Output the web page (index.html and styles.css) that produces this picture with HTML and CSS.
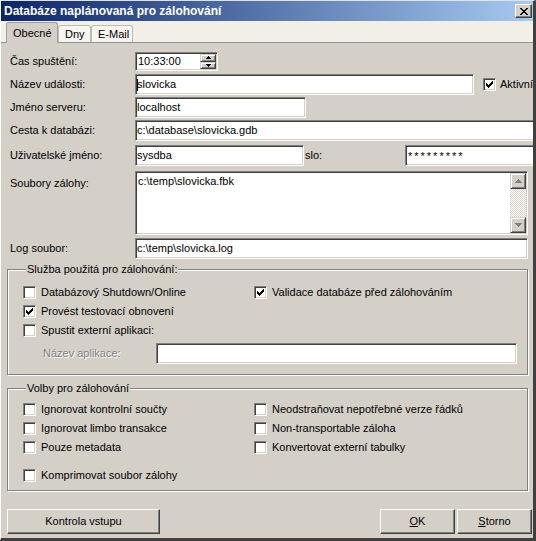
FILE: index.html
```html
<!DOCTYPE html>
<html lang="cs">
<head>
<meta charset="utf-8">
<title>Databáze naplánovaná pro zálohování</title>
<link rel="stylesheet" href="styles.css">
</head>
<body>
<div class="window">
  <div class="titlebar">
    <span class="title">Databáze naplánovaná pro zálohování</span>
    <span class="close"><svg width="8" height="7" viewBox="0 0 8 7" shape-rendering="crispEdges"><path fill="#000" d="M0 0h2v1H0zM6 0h2v1H6zM1 1h2v1H1zM5 1h2v1H5zM2 2h4v1H2zM3 3h2v1H3zM2 4h4v1H2zM1 5h2v1H1zM5 5h2v1H5zM0 6h2v1H0zM6 6h2v1H6z"/></svg></span>
  </div>
  <div class="tabstrip">
    <div class="tab active t1">Obecné</div>
    <div class="tab t2">Dny</div>
    <div class="tab t3">E-Mail</div>
  </div>
  <div class="page">
    <div class="row r-time">
      <span class="lbl">Čas spuštění:</span>
      <div class="field time">
        <span class="ftext">10:33:00</span>
        <div class="spin">
          <span class="sbtn"><svg width="5" height="3" viewBox="0 0 5 3" shape-rendering="crispEdges"><path fill="#000" d="M2 0h1v1H2zM1 1h3v1H1zM0 2h5v1H0z"/></svg></span>
          <span class="sbtn"><svg width="5" height="3" viewBox="0 0 5 3" shape-rendering="crispEdges"><path fill="#000" d="M0 0h5v1H0zM1 1h3v1H1zM2 2h1v1H2z"/></svg></span>
        </div>
      </div>
    </div>
    <div class="row r-name">
      <span class="lbl">Název události:</span>
      <div class="field w-name"><i class="caret"></i>slovicka</div>
      <span class="chk chk-akt"><svg width="7" height="7" viewBox="0 0 7 7" shape-rendering="crispEdges"><path fill="#000" d="M6 0h1v1H6zM5 1h2v1H5zM0 2h1v1H0zM4 2h3v1H4zM0 3h2v1H0zM3 3h3v1H3zM0 4h5v1H0zM1 5h3v1H1zM2 6h1v1H2z"/></svg></span>
      <span class="chklbl">Aktivní</span>
    </div>
    <div class="row r-srv">
      <span class="lbl">Jméno serveru:</span>
      <div class="field w-srv">localhost</div>
    </div>
    <div class="row r-path">
      <span class="lbl">Cesta k databázi:</span>
      <div class="field w-path">c:\database\slovicka.gdb</div>
    </div>
    <div class="row r-user">
      <span class="lbl">Uživatelské jméno:</span>
      <div class="field w-user">sysdba</div>
      <span class="pwlbl">slo:</span>
      <div class="field w-pw">*********</div>
    </div>
    <div class="row r-memo">
      <span class="lbl lbl-top">Soubory zálohy:</span>
      <div class="field memo">
        <div class="memotext">c:\temp\slovicka.fbk</div>
        <div class="vscroll">
          <span class="scbtn"><svg width="7" height="4" viewBox="0 0 7 4" shape-rendering="crispEdges"><path fill="#808080" d="M3 0h1v1H3zM2 1h3v1H2zM1 2h5v1H1zM0 3h7v1H0z"/></svg></span>
          <span class="sctrack"></span>
          <span class="scbtn"><svg width="7" height="4" viewBox="0 0 7 4" shape-rendering="crispEdges"><path fill="#808080" d="M0 0h7v1H0zM1 1h5v1H1zM2 2h3v1H2zM3 3h1v1H3z"/></svg></span>
        </div>
      </div>
    </div>
    <div class="row r-log">
      <span class="lbl">Log soubor:</span>
      <div class="field w-log">c:\temp\slovicka.log</div>
    </div>

    <fieldset class="group g1">
      <legend>Služba použitá pro zálohování:</legend>
      <div class="cgrid">
        <div class="crow"><span class="chk"></span><span class="chklbl">Databázový Shutdown/Online</span></div>
        <div class="crow"><span class="chk"><svg width="7" height="7" viewBox="0 0 7 7" shape-rendering="crispEdges"><path fill="#000" d="M6 0h1v1H6zM5 1h2v1H5zM0 2h1v1H0zM4 2h3v1H4zM0 3h2v1H0zM3 3h3v1H3zM0 4h5v1H0zM1 5h3v1H1zM2 6h1v1H2z"/></svg></span><span class="chklbl">Validace databáze před zálohováním</span></div>
        <div class="crow"><span class="chk"><svg width="7" height="7" viewBox="0 0 7 7" shape-rendering="crispEdges"><path fill="#000" d="M6 0h1v1H6zM5 1h2v1H5zM0 2h1v1H0zM4 2h3v1H4zM0 3h2v1H0zM3 3h3v1H3zM0 4h5v1H0zM1 5h3v1H1zM2 6h1v1H2z"/></svg></span><span class="chklbl">Provést testovací obnovení</span></div>
        <div class="crow"></div>
        <div class="crow"><span class="chk"></span><span class="chklbl">Spustit externí aplikaci:</span></div>
      </div>
      <div class="approw">
        <span class="dislbl">Název aplikace:</span>
        <div class="field w-app"></div>
      </div>
    </fieldset>

    <fieldset class="group g2">
      <legend>Volby pro zálohování</legend>
      <div class="cgrid">
        <div class="crow"><span class="chk"></span><span class="chklbl">Ignorovat kontrolní součty</span></div>
        <div class="crow"><span class="chk"></span><span class="chklbl">Neodstraňovat nepotřebné verze řádků</span></div>
        <div class="crow"><span class="chk"></span><span class="chklbl">Ignorovat limbo transakce</span></div>
        <div class="crow"><span class="chk"></span><span class="chklbl">Non-transportable záloha</span></div>
        <div class="crow"><span class="chk"></span><span class="chklbl">Pouze metadata</span></div>
        <div class="crow"><span class="chk"></span><span class="chklbl">Konvertovat externí tabulky</span></div>
        <div class="crow crow-gap"><span class="chk"></span><span class="chklbl">Komprimovat soubor zálohy</span></div>
      </div>
    </fieldset>

    <div class="buttons">
      <button class="btn btn-check" type="button">Kontrola vstupu</button>
      <span class="spacer"></span>
      <button class="btn btn-ok" type="button"><u>O</u>K</button>
      <button class="btn btn-cancel" type="button"><u>S</u>torno</button>
    </div>
  </div>
</div>
</body>
</html>
```

FILE: styles.css
```css
* { box-sizing: border-box; }

body {
  margin: 0;
  font-family: "Liberation Sans", Arial, sans-serif;
  font-size: 11px;
  line-height: 13px;
  color: #000;
  background: #d4d0c8;
}

.window {
  width: 536px;
  height: 541px;
  background: #d4d0c8;
  border-style: solid;
  border-width: 1px 3px 3px 1px;
  border-color: #e4e2dc #404040 #404040 #ffffff;
  overflow: hidden;
  display: flex;
  flex-direction: column;
}

/* title bar */
.titlebar {
  flex: none;
  height: 20px;
  display: flex;
  align-items: center;
  padding-left: 3px;
  background: linear-gradient(to right, #0a246a, #a6caf0);
}
.title {
  flex: 1;
  color: #fff;
  font-weight: bold;
  font-size: 12px;
  white-space: nowrap;
}
.close {
  width: 17px;
  height: 14px;
  margin-right: 1px;
  background: #d4d0c8;
  border: 1px solid;
  border-color: #fff #404040 #404040 #fff;
  box-shadow: inset -1px -1px #808080;
  display: flex;
  align-items: center;
  justify-content: center;
}
.close svg { display: block; }

/* tabs */
.tabstrip {
  flex: none;
  height: 22px;
  background: #f1efe6;
  border-bottom: 1px solid #8f9597;
  display: flex;
  align-items: flex-end;
  padding-left: 5px;
}
.tab {
  height: 17px;
  padding: 2px 0 0 6px;
  background: #f6f5f0;
  border: 1px solid #bdbbb0;
  border-bottom: none;
  border-radius: 3px 3px 0 0;
  white-space: nowrap;
}
.tab.active {
  height: 21px;
  margin-bottom: -1px;
  padding-top: 4px;
  background: #d4d0c8;
  border-color: #9c9f9f;
}
.t1 { width: 52px; }
.t2 { width: 33px; }
.t3 { width: 42px; }

/* page */
.page {
  flex: 1;
  min-height: 0;
  display: flex;
  flex-direction: column;
  padding-left: 6px;
  overflow: hidden;
}
.row {
  flex: none;
  display: flex;
  align-items: center;
  padding-left: 3px;
  white-space: nowrap;
}
.lbl {
  flex: none;
  width: 125px;
}
.lbl-top {
  align-self: flex-start;
  padding-top: 6px;
}

.r-time { margin-top: 9px; }
.r-name { margin-top: 3px; }
.r-srv  { margin-top: 2px; }
.r-path { margin-top: 2px; }
.r-user { margin-top: 4px; }
.r-memo { margin-top: 5px; }
.r-log  { margin-top: 3px; }

.field {
  flex: none;
  height: 21px;
  background: #fff;
  border: 1px solid;
  border-color: #808080 #fff #fff #808080;
  box-shadow: inset 1px 1px #404040, inset -1px -1px #d4d0c8;
  padding: 0 1px;
  display: flex;
  align-items: center;
  white-space: nowrap;
  overflow: hidden;
}

.time {
  width: 83px;
  height: 19px;
  padding-right: 1px;
}
.ftext { flex: 1; padding-left: 1px; }
.spin {
  width: 16px;
  align-self: stretch;
  display: flex;
  flex-direction: column;
  margin: 1px 0;
}
.sbtn {
  flex: 1;
  background: #d4d0c8;
  border: 1px solid;
  border-color: #d4d0c8 #404040 #404040 #d4d0c8;
  box-shadow: inset 1px 1px #fff, inset -1px -1px #808080;
  display: flex;
  align-items: center;
  justify-content: center;
}
.sbtn svg, .scbtn svg, .chk svg { display: block; }

.w-name { width: 339px; }
.caret {
  display: inline-block;
  width: 1px;
  height: 12px;
  background: #000;
  margin-right: -1px;
}
.w-srv  { width: 171px; }
.w-path { width: 410px; }
.w-user { width: 169px; }
.w-pw   { width: 140px; padding-left: 2px; letter-spacing: 2px; padding-top: 2px; }
.w-log  { width: 393px; }

.pwlbl {
  flex: none;
  width: 101px;
  padding-left: 1px;
}

.memo {
  width: 393px;
  height: 64px;
  padding: 0;
  align-items: stretch;
}
.memotext {
  flex: 1;
  padding: 3px 0 0 2px;
}
.vscroll {
  width: 16px;
  flex: none;
  margin: 1px 1px 1px 0;
  display: flex;
  flex-direction: column;
}
.scbtn {
  height: 16px;
  flex: none;
  background: #d4d0c8;
  border: 1px solid;
  border-color: #d4d0c8 #404040 #404040 #d4d0c8;
  box-shadow: inset 1px 1px #fff, inset -1px -1px #808080;
  display: flex;
  align-items: center;
  justify-content: center;
}
.sctrack {
  flex: 1;
  background: repeating-conic-gradient(#d4d0c8 0 25%, #ffffff 0 50%) 0 0 / 2px 2px;
}

/* checkboxes */
.chk {
  flex: none;
  width: 13px;
  height: 13px;
  background: #fff;
  border: 1px solid;
  border-color: #808080 #fff #fff #808080;
  box-shadow: inset 1px 1px #404040, inset -1px -1px #d4d0c8;
  display: flex;
  align-items: center;
  justify-content: center;
}
.chklbl {
  margin-left: 5px;
  white-space: nowrap;
}
.chk-akt { margin-left: 9px; }
.r-name .chklbl { margin-left: 4px; }

/* group boxes */
.group {
  flex: none;
  width: 521px;
  margin: 0;
  border: 1px solid #808080;
  box-shadow: inset 1px 1px #fff, 1px 1px #fff;
  min-width: 0;
}
.group legend {
  padding: 0 1px;
  margin-left: 3px;
  background: #d4d0c8;
  line-height: 13px;
}
.g1 {
  margin-top: 4px;
  padding: 7px 0 10px 15px;
}
.g2 {
  margin-top: 7px;
  padding: 5px 0 5px 15px;
}
.cgrid {
  display: grid;
  grid-template-columns: 231px 1fr;
}
.crow {
  height: 19px;
  display: flex;
  align-items: center;
}
.crow-gap { margin-top: 9px; }

.approw {
  margin-top: 3px;
  display: flex;
  align-items: center;
}
.dislbl {
  flex: none;
  width: 113px;
  margin-left: 20px;
  color: #808080;
  text-shadow: 1px 1px #fff;
  white-space: nowrap;
}
.w-app { width: 361px; }

/* buttons */
.buttons {
  flex: none;
  display: flex;
  margin-top: 18px;
  margin-right: 1px;
  gap: 2px;
}
.spacer { flex: 1; }
.btn {
  height: 25px;
  margin: 0;
  padding: 0;
  font: inherit;
  color: #000;
  background: #d4d0c8;
  border: 1px solid;
  border-color: #fff #404040 #404040 #fff;
  box-shadow: inset -1px -1px #808080;
}
.btn-check { width: 153px; }
.btn-ok, .btn-cancel { width: 75px; }
.btn u { text-decoration: underline; }
```
